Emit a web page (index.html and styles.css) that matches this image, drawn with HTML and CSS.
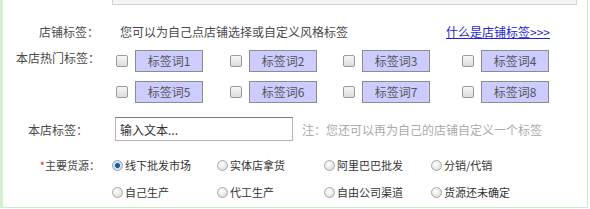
FILE: index.html
```html
<!DOCTYPE html>
<html lang="zh-CN">
<head>
<meta charset="utf-8">
<title>店铺标签</title>
<link rel="stylesheet" href="styles.css">
</head>
<body>
<div class="panel">
  <div class="prev-box"></div>

  <div class="row row-intro">
    <span class="label label-intro">店铺标签：</span>
    <span class="intro-text">您可以为自己点店铺选择或自定义风格标签</span>
    <a class="help-link" href="#">什么是店铺标签&gt;&gt;&gt;</a>
  </div>

  <div class="row row-tags">
    <span class="label label-tags">本店热门标签：</span>
    <div class="tag-grid">
      <label class="tag-cell"><input type="checkbox" class="cb"><span class="tag">标签词1</span></label>
      <label class="tag-cell"><input type="checkbox" class="cb"><span class="tag">标签词2</span></label>
      <label class="tag-cell"><input type="checkbox" class="cb"><span class="tag">标签词3</span></label>
      <label class="tag-cell"><input type="checkbox" class="cb"><span class="tag">标签词4</span></label>
      <label class="tag-cell"><input type="checkbox" class="cb"><span class="tag">标签词5</span></label>
      <label class="tag-cell"><input type="checkbox" class="cb"><span class="tag">标签词6</span></label>
      <label class="tag-cell"><input type="checkbox" class="cb"><span class="tag">标签词7</span></label>
      <label class="tag-cell"><input type="checkbox" class="cb"><span class="tag">标签词8</span></label>
    </div>
  </div>

  <div class="row row-custom">
    <span class="label label-custom">本店标签：</span>
    <input class="text-input" type="text" value="输入文本...">
    <span class="note">注：您还可以再为自己的店铺自定义一个标签</span>
  </div>

  <div class="row row-source">
    <span class="label label-source"><span class="req">*</span>主要货源：</span>
    <div class="radio-grid">
      <label class="radio-cell"><input type="radio" name="src" class="rd" checked><span>线下批发市场</span></label>
      <label class="radio-cell"><input type="radio" name="src" class="rd"><span>实体店拿货</span></label>
      <label class="radio-cell"><input type="radio" name="src" class="rd"><span>阿里巴巴批发</span></label>
      <label class="radio-cell"><input type="radio" name="src" class="rd"><span>分销/代销</span></label>
      <label class="radio-cell"><input type="radio" name="src" class="rd"><span>自己生产</span></label>
      <label class="radio-cell"><input type="radio" name="src" class="rd"><span>代工生产</span></label>
      <label class="radio-cell"><input type="radio" name="src" class="rd"><span>自由公司渠道</span></label>
      <label class="radio-cell"><input type="radio" name="src" class="rd"><span>货源还未确定</span></label>
    </div>
  </div>
</div>
</body>
</html>
```

FILE: styles.css
```css
html, body {
  margin: 0;
  padding: 0;
  background: #ffffff;
}

body {
  font-family: "Noto Sans CJK SC", "Microsoft YaHei", sans-serif;
  font-size: 12px;
  color: #4a4a4a;
}

.panel {
  width: 588px;
  height: 208px;
  box-sizing: border-box;
  border-left: 3px solid #d2f0d2;
  border-right: 1px solid #c8ecc8;
  border-bottom: 1px solid #c8ecc8;
  background: #ffffff;
}

.prev-box {
  margin-left: 109px;
  width: 465px;
  height: 5px;
  box-sizing: border-box;
  border: 1px solid #d4d4d4;
  border-top: none;
  background: #f5f5f5;
}

.row {
  display: flex;
}

.label {
  flex: 0 0 auto;
  text-align: right;
  white-space: nowrap;
  color: #4a4a4a;
}

/* intro row */
.row-intro {
  margin-top: 17px;
  height: 20px;
  line-height: 20px;
  align-items: center;
}

.label-intro {
  width: 96px;
}

.intro-text {
  flex: 0 0 326px;
  margin-left: 21px;
  color: #4a4a4a;
}

.help-link {
  color: #1f1fd8;
  text-decoration: underline;
  white-space: nowrap;
}

/* tags */
.row-tags {
  margin-top: 8px;
  align-items: flex-start;
}

.label-tags {
  width: 97px;
  line-height: 16px;
}

.tag-grid {
  margin-left: 16px;
  display: grid;
  grid-template-columns: 114px 113px 119px auto;
  row-gap: 9px;
}

.tag-cell {
  display: flex;
  align-items: center;
  height: 22px;
}

.cb {
  appearance: none;
  -webkit-appearance: none;
  margin: 0 7px 0 0;
  width: 12px;
  height: 12px;
  box-sizing: border-box;
  border: 1px solid #9a9a9a;
  border-radius: 2px;
  background: linear-gradient(#f6f6f6, #dcdcdc);
}

.tag {
  box-sizing: border-box;
  width: 68px;
  height: 22px;
  line-height: 20px;
  text-align: center;
  background: #ccccff;
  border: 1px solid #8c8c8c;
  color: #555555;
}

/* custom */
.row-custom {
  margin-top: 14px;
  align-items: center;
  height: 24px;
}

.label-custom {
  width: 85px;
}

.text-input {
  margin: 0 0 0 27px;
  box-sizing: border-box;
  width: 178px;
  height: 24px;
  padding: 0 4px;
  border: 1px solid #b4b4b4;
  border-top-color: #7a7a7a;
  font-family: "Noto Sans CJK SC", sans-serif;
  font-size: 12px;
  color: #333333;
  background: #ffffff;
}

.note {
  margin-left: 9px;
  color: #ababab;
  white-space: nowrap;
}

/* source */
.row-source {
  margin-top: 14px;
  align-items: flex-start;
  font-size: 11px;
}

.label-source {
  width: 97px;
  line-height: 20px;
  color: #444444;
}

.req {
  color: #e03030;
}

.radio-grid {
  margin-left: 12px;
  display: grid;
  grid-template-columns: 105px 107px 107px auto;
  row-gap: 7px;
}

.radio-cell {
  display: flex;
  align-items: center;
  height: 20px;
  color: #333333;
  white-space: nowrap;
}

.rd {
  appearance: none;
  -webkit-appearance: none;
  margin: 0 2px 0 0;
  width: 11px;
  height: 11px;
  border-radius: 50%;
  border: 1px solid #a8a8a8;
  box-sizing: border-box;
  background: radial-gradient(circle at 40% 35%, #ffffff 0%, #e8e8e8 55%, #cfcfcf 100%);
}

.rd:checked {
  border-color: #8aa0b8;
  background: radial-gradient(circle at 50% 50%, #1d4f8c 0%, #2d63a6 35%, #cfd9e6 45%, #eef2f7 100%);
}
```
